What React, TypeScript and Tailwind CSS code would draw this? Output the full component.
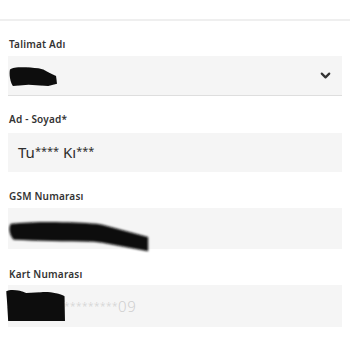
import { ChevronDown } from 'lucide-react'

const font = { fontFamily: '"Noto Sans", "DejaVu Sans", sans-serif' }

function Label({ children }: { children: React.ReactNode }) {
  return (
    <div className="px-[9px] text-[10px] font-semibold leading-[10px] text-[#333] tracking-[0.2px]">
      {children}
    </div>
  )
}

function Scribble({ className, d }: { className: string; d: string }) {
  return (
    <svg className={`absolute pointer-events-none ${className}`} viewBox="0 0 100 40" preserveAspectRatio="none">
      <defs>
        <filter id="soft" x="-10%" y="-10%" width="120%" height="120%">
          <feGaussianBlur stdDeviation="0.9" />
        </filter>
      </defs>
      <path d={d} fill="#0b0b0b" filter="url(#soft)" />
    </svg>
  )
}

export default function App() {
  return (
    <div className="w-[350px] h-[350px] bg-white overflow-hidden relative" style={font}>
      <div className="h-[19px]" />
      <div className="h-[2px] bg-[#efefef]" />

      <div className="pt-[18px] flex flex-col">
        <Label>Talimat Adı</Label>
        <div className="mt-[7px] mx-[8px] h-[40px] bg-[#f5f5f5] border-b border-[#dedede] flex items-center justify-end pr-[9px] relative">
          <ChevronDown size={15} strokeWidth={3.5} className="text-[#333]" />
          <Scribble
            className="left-[1px] top-[9px] w-[49px] h-[22px]"
            d="M2 8 C10 2 40 4 60 6 L70 8 L82 14 L96 20 L98 34 L80 38 L40 36 L8 38 C2 30 0 16 2 8 Z"
          />
        </div>

        <div className="mt-[18px]">
          <Label>Ad - Soyad*</Label>
        </div>
        <div className="mt-[9px] mx-[8px] h-[39px] bg-[#f5f5f5] flex items-center pl-[10px]">
          <span className="text-[15px] font-normal text-[#2e2e2e] leading-none">
            Tu<span className="text-[11px] align-[3px]">****</span> Kı<span className="text-[11px] align-[3px]">***</span>
          </span>
        </div>

        <div className="mt-[19px]">
          <Label>GSM Numarası</Label>
        </div>
        <div className="mt-[7px] mx-[8px] h-[41px] bg-[#f5f5f5] relative">
          <Scribble
            className="left-[0px] top-[10px] w-[143px] h-[38px]"
            d="M2 6 C20 3 45 4 62 6 L66 7 L98 20 L98 35 L66 26 L60 25 C40 25 20 24 4 23 C1 18 0 10 2 6 Z"
          />
        </div>

        <div className="mt-[20px]">
          <Label>Kart Numarası</Label>
        </div>
        <div className="mt-[6px] mx-[8px] h-[42px] bg-[#f5f5f5] flex items-center pl-[56px] relative">
          <span className="text-[15px] font-light text-[#cfcfcf] leading-none tracking-[0.5px]">
            <span className="text-[10px] align-[2px]">*********</span>09
          </span>
          <Scribble
            className="left-[-3px] top-[3px] w-[62px] h-[33px]"
            d="M2 4 C10 1 25 3 34 6 L58 5 C70 4 88 6 96 10 L98 90 L92 96 L40 94 L10 94 C6 70 6 40 2 4 Z"
          />
        </div>
      </div>
    </div>
  )
}
